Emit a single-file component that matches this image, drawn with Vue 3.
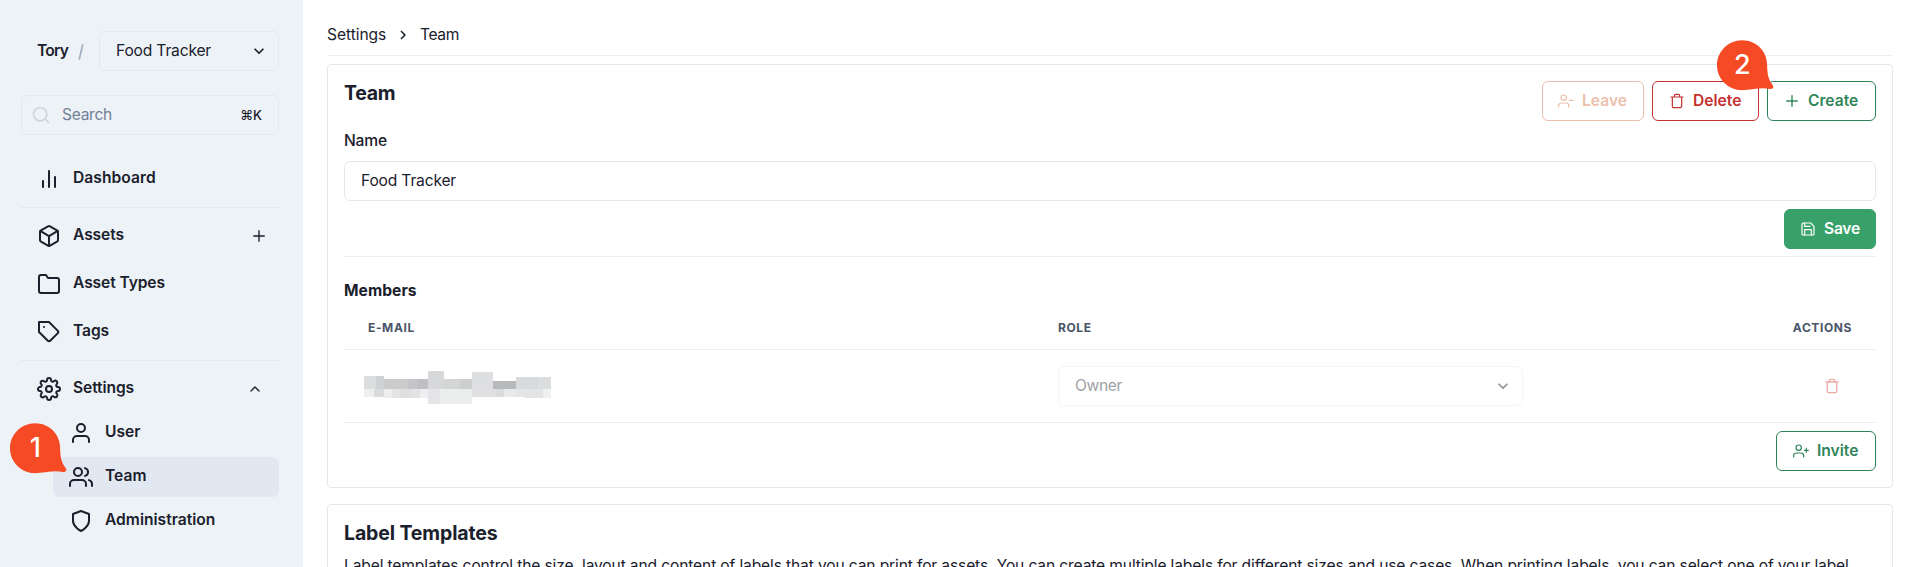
<script setup>
const shapes = {
  chart: '<path d="M18 20V10M12 20V4M6 20v-6"/>',
  box: '<path d="M21 16V8a2 2 0 0 0-1-1.73l-7-4a2 2 0 0 0-2 0l-7 4A2 2 0 0 0 3 8v8a2 2 0 0 0 1 1.73l7 4a2 2 0 0 0 2 0l7-4A2 2 0 0 0 21 16z"/><path d="M3.27 6.96 12 12.01l8.73-5.05M12 22.08V12"/>',
  folder: '<path d="M22 19a2 2 0 0 1-2 2H4a2 2 0 0 1-2-2V5a2 2 0 0 1 2-2h5l2 3h9a2 2 0 0 1 2 2z"/>',
  tag: '<path d="M20.59 13.41l-7.17 7.17a2 2 0 0 1-2.83 0L2 12V2h10l8.59 8.59a2 2 0 0 1 0 2.82z"/><path d="M7 7h.01"/>',
  gear: '<circle cx="12" cy="12" r="3"/><path d="M19.4 15a1.65 1.65 0 0 0 .33 1.82l.06.06a2 2 0 0 1 0 2.83 2 2 0 0 1-2.83 0l-.06-.06a1.65 1.65 0 0 0-1.82-.33 1.65 1.65 0 0 0-1 1.51V21a2 2 0 0 1-2 2 2 2 0 0 1-2-2v-.09A1.65 1.65 0 0 0 9 19.4a1.65 1.65 0 0 0-1.82.33l-.06.06a2 2 0 0 1-2.83 0 2 2 0 0 1 0-2.83l.06-.06a1.65 1.65 0 0 0 .33-1.82 1.65 1.65 0 0 0-1.51-1H3a2 2 0 0 1-2-2 2 2 0 0 1 2-2h.09A1.65 1.65 0 0 0 4.6 9a1.65 1.65 0 0 0-.33-1.82l-.06-.06a2 2 0 0 1 0-2.83 2 2 0 0 1 2.83 0l.06.06a1.65 1.65 0 0 0 1.82.33H9a1.65 1.65 0 0 0 1-1.51V3a2 2 0 0 1 2-2 2 2 0 0 1 2 2v.09a1.65 1.65 0 0 0 1 1.51 1.65 1.65 0 0 0 1.82-.33l.06-.06a2 2 0 0 1 2.83 0 2 2 0 0 1 0 2.83l-.06.06a1.65 1.65 0 0 0-.33 1.82V9a1.65 1.65 0 0 0 1.51 1H21a2 2 0 0 1 2 2 2 2 0 0 1-2 2h-.09a1.65 1.65 0 0 0-1.51 1z"/>',
  user: '<path d="M20 21v-2a4 4 0 0 0-4-4H8a4 4 0 0 0-4 4v2"/><circle cx="12" cy="7" r="4"/>',
  users: '<path d="M17 21v-2a4 4 0 0 0-4-4H5a4 4 0 0 0-4 4v2"/><circle cx="9" cy="7" r="4"/><path d="M23 21v-2a4 4 0 0 0-3-3.87M16 3.13a4 4 0 0 1 0 7.75"/>',
  shield: '<path d="M12 22s8-4 8-10V5l-8-3-8 3v7c0 6 8 10 8 10z"/>',
  search: '<circle cx="11" cy="11" r="8"/><path d="M21 21l-4.35-4.35"/>',
  plus: '<path d="M12 5v14M5 12h14"/>',
  up: '<path d="M18 15l-6-6-6 6"/>',
  trash: '<path d="M3 6h18M19 6v14a2 2 0 0 1-2 2H7a2 2 0 0 1-2-2V6m3 0V4a2 2 0 0 1 2-2h4a2 2 0 0 1 2 2v2"/>',
  save: '<path d="M19 21H5a2 2 0 0 1-2-2V5a2 2 0 0 1 2-2h11l5 5v11a2 2 0 0 1-2 2z"/><path d="M17 21v-8H7v8M7 3v5h8"/>',
  userMinus: '<path d="M16 21v-2a4 4 0 0 0-4-4H5a4 4 0 0 0-4 4v2"/><circle cx="8.5" cy="7" r="4"/><path d="M23 11h-6"/>',
  userPlus: '<path d="M16 21v-2a4 4 0 0 0-4-4H5a4 4 0 0 0-4 4v2"/><circle cx="8.5" cy="7" r="4"/><path d="M20 8v6M23 11h-6"/>'
}
const assets = [
  { label: 'Assets', icon: 'box', add: true },
  { label: 'Asset Types', icon: 'folder' },
  { label: 'Tags', icon: 'tag' }
]
const settings = [
  { label: 'User', icon: 'user' },
  { label: 'Team', icon: 'users', active: true, pin: 1 },
  { label: 'Administration', icon: 'shield' }
]
// Redacted e-mail mosaic: x, y, width, height, colour
const mosaic = [
  [0, 5, 12, 13, '#dcdddf'], [12, 5, 8, 13, '#d0d1d3'], [20, 8, 24, 10, '#cbcbcc'], [44, 8, 10, 10, '#c4c4c9'],
  [54, 8, 10, 10, '#bfbfc4'], [64, 0, 16, 18, '#d7d8da'], [80, 8, 16, 10, '#d4d5d6'], [96, 8, 12, 10, '#cdced0'],
  [108, 1, 21, 17, '#dedfe1'], [129, 10, 23, 8, '#b8b9bd'], [152, 6, 22, 12, '#d9dadc'], [174, 6, 13, 12, '#dcdddf'],
  [0, 18, 10, 8, '#eef0ef'], [10, 18, 10, 8, '#d9dadc'], [20, 18, 8, 9, '#eeeeee'], [28, 18, 8, 9, '#e4e4e5'],
  [36, 18, 11, 9, '#dedfe1'], [47, 18, 9, 9, '#e2e3e5'], [56, 18, 8, 9, '#efeff1'], [64, 18, 12, 15, '#e5e5e7'],
  [76, 18, 32, 15, '#eceeed'], [108, 18, 24, 8, '#e0e0e2'], [132, 18, 8, 8, '#d9dadb'], [140, 18, 12, 8, '#e8eae9'],
  [152, 18, 8, 8, '#e4e5e6'], [160, 18, 19, 9, '#e3e4e5'], [179, 18, 8, 9, '#eff0f0']
]
const pinPath = 'M25 .2C39.5 .2 50 11.3 50.1 24.5c.1 11.5 2.2 16.2 5.5 20.5 1.8 2.6 0 4.3-2.6 3.9-7.5-1.500-14.500-.3-20.500 .7C28.500 50.200 27 50.200 25 50.200 11.500 50.200 0 39 0 25.200 0 11.500 11.200 .2 25 .2z'
</script>

<template>
  <div class="app">
    <aside class="sidebar">
      <div class="brand">
        <b>Tory</b>
        <svg class="slash" viewBox="0 0 6 18"><path d="M4.8 1.2 1.2 16.6" /></svg>
        <div class="select"><span class="t">Food Tracker</span><svg class="chev" viewBox="0 0 24 24"><path d="M16.59 8.59L12 13.17 7.41 8.59 6 10l6 6 6-6z" /></svg></div>
      </div>
      <div class="search">
        <svg class="ic i20" viewBox="0 0 24 24" v-html="shapes.search" />
        <span class="t">Search</span><kbd>⌘K</kbd>
      </div>
      <nav>
        <a class="item"><svg class="ic i24" viewBox="0 0 24 24" v-html="shapes.chart" /><span class="dash">Dashboard</span></a>
        <hr>
        <a v-for="n in assets" :key="n.label" class="item">
          <svg class="ic i24" viewBox="0 0 24 24" v-html="shapes[n.icon]" /><span>{{ n.label }}</span>
          <svg v-if="n.add" class="ic i18 end add" viewBox="0 0 24 24" v-html="shapes.plus" />
        </a>
        <hr>
        <a class="item group"><svg class="ic i24" viewBox="0 0 24 24" v-html="shapes.gear" /><span>Settings</span><svg class="ic i16 end up" viewBox="0 0 24 24" v-html="shapes.up" /></a>
        <div class="sub">
          <a v-for="n in settings" :key="n.label" class="subitem" :class="{ active: n.active }">
            <svg class="ic i24" viewBox="0 0 24 24" v-html="shapes[n.icon]" /><span>{{ n.label }}</span>
            <span v-if="n.pin" class="pin team-pin"><svg viewBox="0 0 57 51"><path :d="pinPath" /></svg><i>1</i></span>
          </a>
        </div>
      </nav>
    </aside>

    <main>
      <div class="crumbs"><span class="c1">Settings</span><svg class="sep" viewBox="0 0 24 24"><path d="M10 6L8.59 7.41 13.17 12l-4.58 4.59L10 18l6-6z" /></svg><span class="c2">Team</span></div>

      <section class="card team">
        <div class="head">
          <h2 class="h-team">Team</h2>
          <div class="btns">
            <button class="btn leave"><svg class="ic i16" viewBox="0 0 24 24" v-html="shapes.userMinus" /><span>Leave</span></button>
            <button class="btn delete"><svg class="ic i16" viewBox="0 0 24 24" v-html="shapes.trash" /><span>Delete</span></button>
            <button class="btn create"><svg class="ic i18" viewBox="0 0 24 24" v-html="shapes.plus" /><span>Create</span>
              <span class="pin create-pin"><svg viewBox="0 0 57 51"><path :d="pinPath" /></svg><i>2</i></span>
            </button>
          </div>
        </div>
        <label>Name</label>
        <div class="input">Food Tracker</div>
        <div class="right"><button class="btn save"><svg class="ic i16" viewBox="0 0 24 24" v-html="shapes.save" /><span>Save</span></button></div>
        <div class="rule"></div>
        <h3>Members</h3>
        <div class="row th"><span>E-mail</span><span>Role</span><span class="act">Actions</span></div>
        <div class="row td">
          <svg class="mosaic" viewBox="0 0 187 33" shape-rendering="crispEdges"><rect v-for="(m, i) in mosaic" :key="i" :x="m[0]" :y="m[1]" :width="m[2]" :height="m[3]" :fill="m[4]" /></svg>
          <div class="select role"><span class="t">Owner</span><svg class="chev" viewBox="0 0 24 24"><path d="M16.59 8.59L12 13.17 7.41 8.59 6 10l6 6 6-6z" /></svg></div>
          <div class="act"><svg class="ic i16 del" viewBox="0 0 24 24" v-html="shapes.trash" /></div>
        </div>
        <div class="right"><button class="btn invite"><svg class="ic i16" viewBox="0 0 24 24" v-html="shapes.userPlus" /><span>Invite</span></button></div>
      </section>

      <section class="card labels">
        <h2 class="h-label">Label Templates</h2>
        <p>Label templates control the size, layout and content of labels that you can print for assets. You can create multiple labels for different sizes and use cases. When printing labels, you can select one of your label</p>
      </section>
    </main>
  </div>
</template>

<style>
body { background: #fff; overflow: hidden; }
</style>

<style scoped>
* { box-sizing: border-box; }
.app { display: flex; width: 1915px; height: 567px; overflow: hidden; font: 15.6px/24px Inter, "Liberation Sans", sans-serif; letter-spacing: -.17px; color: #1a202c; }
h2, h3, p { margin: 0; }
svg { display: block; flex: none; }
.ic { fill: none; stroke: currentColor; stroke-width: 2; stroke-linecap: round; stroke-linejoin: round; }
.i16 { width: 16px; height: 16px; }
.i18 { width: 18px; height: 18px; }
.i20 { width: 20px; height: 20px; }
.i24 { width: 24px; height: 24px; }

.sidebar { width: 303px; flex: none; background: #edf2f7; padding: 31px 24px 0 21px; }
.brand { display: flex; align-items: center; height: 40px; padding-left: 16px; }
.brand b { font-weight: 600; letter-spacing: -.75px; width: 41px; }
.slash { width: 6px; height: 18px; margin: 2px 15px 0 0; fill: none; stroke: #a0aec0; stroke-width: 1.7; }
.select { display: flex; align-items: center; justify-content: space-between; height: 40px; border: 1px solid #e2e8f0; border-radius: 6px; padding: 0 9px 0 16px; }
.brand .select { flex: 1; }
.chev { width: 20px; height: 20px; fill: currentColor; }
.search { display: flex; align-items: center; height: 40px; margin-top: 24px; border: 1px solid #e2e8f0; border-radius: 6px; padding: 0 16px 0 9px; color: #718096; letter-spacing: -.3px; }
.search .ic { color: #cbd5e0; margin-right: 11px; }
kbd { margin-left: auto; font: 500 13px/16px Inter, "Liberation Sans", sans-serif; letter-spacing: 0; color: #1a202c; }
nav { margin-top: 24px; }
.item { display: flex; align-items: center; height: 40px; margin-bottom: 8px; padding: 0 11px 0 16px; font-weight: 600; letter-spacing: -.1px; }
.item span { margin: 0 0 2px 12px; }
.item .dash { letter-spacing: .05px; }
.end { margin-left: auto; }
.add { stroke-width: 1.8; }
.up { margin-right: 5px; }
hr { height: 1px; margin: 0 0 8px; border: 0; background: #e2e8f0; }
.group { margin-bottom: 4px; }
.sub { margin-left: 32px; }
.subitem { position: relative; display: flex; align-items: center; height: 40px; margin-bottom: 4px; padding-left: 16px; border-radius: 6px; font-weight: 600; letter-spacing: 0; }
.subitem > .ic + span { margin: 0 0 2px 12px; }
.active { background: #e2e8f2; }

.pin { position: absolute; width: 57px; height: 51px; }
.pin svg { width: 57px; height: 51px; fill: #f64a24; }
.pin i { position: absolute; left: 0; top: 9px; width: 50px; text-align: center; font: 500 27px/32px Inter, "Liberation Sans", sans-serif; color: #fff; letter-spacing: 0; }
.team-pin { left: -42.6px; top: -34.5px; }
.create-pin { left: -50.6px; top: -42.4px; }

main { flex: 1; min-width: 0; padding: 0 22px 0 24px; }
.crumbs { display: flex; align-items: center; height: 56px; padding-top: 15px; border-bottom: 1px solid #edf0f2; }
.c1 { width: 61px; letter-spacing: -.05px; }
.sep { width: 18px; height: 18px; margin: 0 8px 0 6px; fill: currentColor; }
.c2 { letter-spacing: -.4px; }
.card { border: 1px solid #e2e8f0; border-radius: 4px; padding: 16px; }
.team { margin-top: 8px; height: 424px; }
.head { display: flex; justify-content: space-between; height: 48px; }
h2 { font-size: 19.5px; line-height: 24px; font-weight: 700; }
.h-team { letter-spacing: -.3px; }
.h-label { letter-spacing: -.12px; }
.btns { display: flex; gap: 8px; }
.btn { position: relative; display: flex; align-items: center; height: 40px; border: 1px solid; border-radius: 6px; padding: 0 16px; background: transparent; font: 600 15.6px/24px Inter, "Liberation Sans", sans-serif; letter-spacing: 0; }
.btn .ic + span { margin-left: 8px; margin-bottom: 1px; }
.btn .ic { stroke-width: 1.8; }
.leave { width: 102px; color: #ecbfac; padding-left: 15px; }
.delete { width: 107px; color: #c53030; }
.create { width: 109px; color: #2f855a; padding-left: 15px; }
.btn.create .ic + span { margin-left: 7px; }
label { display: block; height: 32px; font-weight: 500; }
.input { height: 40px; border: 1px solid #e2e8f0; border-radius: 6px; padding: 7px 16px; }
.right { display: flex; justify-content: flex-end; margin-top: 8px; }
.save { width: 92px; color: #fff; background: #38a169; border-color: #38a169; letter-spacing: -.25px; padding-left: 15px; }
.rule { height: 1px; margin-top: 7px; background: #edf0f2; }
h3 { margin-top: 22px; font-size: 15.6px; line-height: 24px; font-weight: 700; letter-spacing: .05px; }
.row { display: grid; grid-template-columns: 714px 465px 1fr; align-items: center; border-bottom: 1px solid #edf0f2; }
.th { height: 47px; padding: 4px 24px 0; font-size: 12px; font-weight: 700; letter-spacing: .6px; text-transform: uppercase; color: #4a5568; grid-template-columns: 690px 465px 1fr; }
.th .act { text-align: right; letter-spacing: .6px; }
.td { height: 73px; padding: 0; }
.mosaic { width: 187px; height: 33px; margin-left: 20px; margin-top: 2px; }
.role { border-color: #f4f6f8; color: #9fa1a6; letter-spacing: -.35px; }
.role .chev { color: #8f9298; }
.td .act { display: flex; justify-content: flex-end; padding-right: 36px; }
.del { color: #eda9a5; }
.invite { width: 100px; color: #2f855a; }
.labels { margin-top: 16px; height: 200px; }
.labels p { margin-top: 9px; white-space: nowrap; letter-spacing: -.137px; }
</style>
